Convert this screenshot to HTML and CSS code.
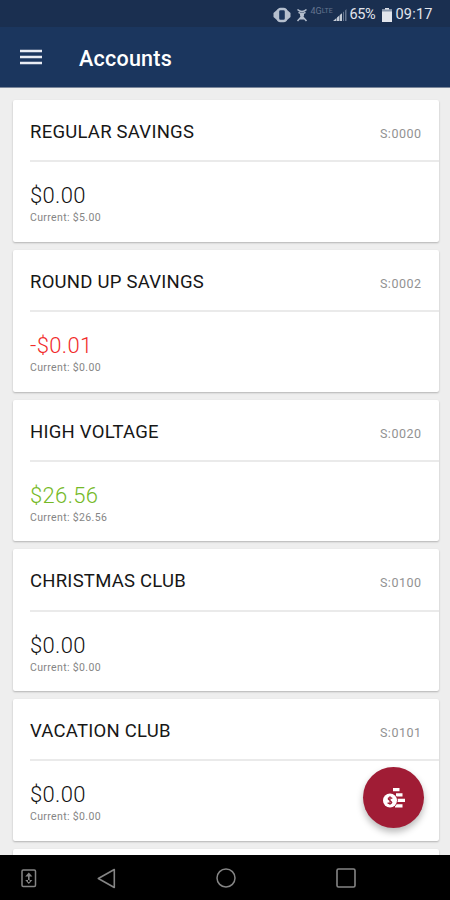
FILE: index.html
```
<!DOCTYPE html>
<html lang="en">
<head>
<meta charset="utf-8">
<title>Accounts</title>
<link rel="stylesheet" href="styles.css">
</head>
<body>
<div class="screen">
  <div class="status">
    <svg class="vibrate" width="18" height="16" viewBox="0 0 18 16"><path d="M5 2 .5 6v4L5 14zM13 2l4.500 4v4L13 14z" fill="#b5bfce"/><rect x="5" y="2" width="8" height="12" rx="2.500" fill="#1b355c" stroke="#b5bfce" stroke-width="2.400"/></svg>
    <svg class="hotspot" width="12" height="14" viewBox="0 0 12 14" fill="none" stroke="#b5bfce" stroke-width="1.500"><path d="M1.500 1.500q4.500 4 9 0M2.500 4.300q3.500 2.200 7 0M6 5.500v3M6 8l-4.500 5M6 8l4.500 5M4 10.800h4"/><circle cx="6" cy="7" r="1.400" fill="#b5bfce"/></svg>
    <span class="network">4G<small>LTE</small></span>
    <svg class="signal" width="14" height="12" viewBox="0 0 14 12"><path d="M0 12h3.500V9zM4 12h2.300V6.500L4 8.500zM6.800 12H9V4.200L6.800 6z" fill="#c5ccd7"/><path d="M10 12h1V2.400l-1 .9zM12 12h1.500V0L12 1.500z" fill="#65758f"/></svg>
    <span class="percent">65%</span>
    <svg class="battery" width="10" height="14" viewBox="0 0 10 14"><path d="M3 0h4v1.500h3V14H0V1.500h3z" fill="#e2e5ec"/><path d="M0 1.500h10v2H0z" fill="#8795aa"/></svg>
    <span class="clock">09:17</span>
  </div>
  <header class="bar">
    <svg class="menu" width="22" height="16" viewBox="0 0 22 16"><path d="M0 2h22M0 8h22M0 14h22" stroke="#e9ecf3" stroke-width="2.300"/></svg>
    <h1>Accounts</h1>
  </header>
  <main class="list">
    <section class="card"><div class="head"><h2>REGULAR SAVINGS</h2><span>S:0000</span></div><div class="body"><b>$0.00</b><p>Current: $5.00</p></div></section>
    <section class="card"><div class="head"><h2>ROUND UP SAVINGS</h2><span>S:0002</span></div><div class="body"><b class="negative">-$0.01</b><p>Current: $0.00</p></div></section>
    <section class="card"><div class="head"><h2>HIGH VOLTAGE</h2><span>S:0020</span></div><div class="body"><b class="positive">$26.56</b><p>Current: $26.56</p></div></section>
    <section class="card"><div class="head"><h2>CHRISTMAS CLUB</h2><span>S:0100</span></div><div class="body"><b>$0.00</b><p>Current: $0.00</p></div></section>
    <section class="card"><div class="head"><h2>VACATION CLUB</h2><span>S:0101</span></div><div class="body"><b>$0.00</b><p>Current: $0.00</p></div></section>
    <section class="card"></section>
  </main>
  <div class="fab">
    <svg width="24" height="22" viewBox="0 0 24 22"><path d="M11 1h6.500v3.200H11zM14 6.300h6.500v3.200H14zM14 11.800h9V15h-9zM13 17.300h7.500v3.200H13z" fill="#fff"/><circle cx="8" cy="13.500" r="7.800" fill="#a01c35"/><circle cx="8" cy="13.500" r="7" fill="#fff"/><path d="M10.300 11.500Q8 9.700 6.300 11.200c-1 1.600 3.600 2.600 3.500 4.300-.8 1.800-3 1.300-4.200.2M8 9.300v8.500" fill="none" stroke="#a01c35" stroke-width="1.200"/></svg>
  </div>
  <nav class="nav">
    <svg width="16" height="19" viewBox="0 0 16 19"><rect x="1" y="1" width="13.500" height="16.500" rx="1.200" fill="none" stroke="#858585" stroke-width="1.500"/><path d="M4.200 7.500 7.800 3.500l3.600 4zM4.200 11l3.600 4 3.600-4zM7 6h1.600v7H7z" fill="#858585"/></svg>
    <svg width="20" height="21" viewBox="0 0 20 21"><path d="M17.300 1.500v18L1.300 10.500z" fill="none" stroke="#858585" stroke-width="1.600" stroke-linejoin="round"/></svg>
    <svg width="20" height="20" viewBox="0 0 20 20"><circle cx="10" cy="10" r="9" fill="none" stroke="#858585" stroke-width="1.500"/></svg>
    <svg width="20" height="20" viewBox="0 0 20 20"><rect x="1" y="1" width="18" height="18" rx="1.500" fill="none" stroke="#858585" stroke-width="1.600"/></svg>
  </nav>
</div>
</body>
</html>
```
FILE: styles.css
```
* { box-sizing: border-box; margin: 0; padding: 0; }
body { font-family: Roboto, sans-serif; background: #eee; }
svg { display: block; flex: none; }
.screen { position: relative; width: 450px; height: 900px; overflow: hidden; display: flex; flex-direction: column; background: #eee; }
.status { flex: none; height: 27px; background: #1a2f50; display: flex; align-items: center; padding: 2px 0 0 272.500px; color: #e2e5ec; font-size: 14.5px; white-space: nowrap; }
.hotspot { margin-left: 5px; }
.network { width: 22px; margin-left: 3px; font-size: 9px; line-height: 9px; color: #65758f; align-self: flex-start; padding-top: 5px; }
.network small { font-size: 7px; vertical-align: 1px; }
.percent { width: 27px; margin-left: 3px; letter-spacing: -.4px; }
.battery { margin-left: 5px; }
.clock { margin-left: 4px; letter-spacing: .2px; }
.bar { flex: none; height: 61px; background: #1b365e; border-bottom: 1px solid #7b879b; display: flex; align-items: center; padding-left: 20px; color: #fff; }
.bar h1 { margin-left: 37px; font-size: 21.5px; line-height: 28px; font-weight: 500; padding-top: 3px; letter-spacing: .25px; }
.list { flex: 1; min-height: 0; overflow: hidden; padding: 12px 11.500px 0 12.500px; display: flex; flex-direction: column; gap: 8px; }
.card { flex: none; height: 141.750px; background: #fff; border-radius: 2px; box-shadow: 0 1px 2px rgba(0,0,0,.25); }
.head { height: 62.250px; margin-left: 17.500px; padding: 4px 17px 0 0; border-bottom: 2px solid #eaeaea; display: flex; align-items: center; justify-content: space-between; }
.head h2 { font-size: 18.500px; line-height: 24px; font-weight: 400; color: #171717; letter-spacing: .24px; }
.head span { font-size: 12.500px; color: #929292; padding-top: 3px; letter-spacing: .5px; }
.body { padding: 20px 0 0 17.500px; }
.body b { display: block; font-weight: 300; font-size: 22px; line-height: 28px; color: #111; letter-spacing: .35px; }
.body p { font-size: 10.500px; line-height: 14px; color: #858585; margin-top: 1px; letter-spacing: .36px; }
.body .negative { color: #f12b2b; }
.body .positive { color: #75b927; }
.fab { position: absolute; left: 363px; top: 767px; width: 61px; height: 61px; border-radius: 50%; background: #a01c35; box-shadow: 0 4px 7px rgba(0,0,0,.28); display: flex; align-items: center; justify-content: center; }
.nav { flex: none; height: 45px; background: #000; display: flex; align-items: center; padding: 1px 0 0 21px; }
.nav svg:nth-child(2) { margin-left: 60px; }
.nav svg:nth-child(3) { margin-left: 99px; }
.nav svg:nth-child(4) { margin-left: 100px; }
```
